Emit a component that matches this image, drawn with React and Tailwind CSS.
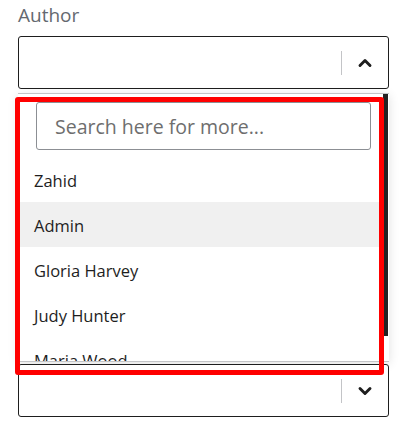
import { ChevronUp, ChevronDown } from 'lucide-react';

const authors = ['Zahid', 'Admin', 'Gloria Harvey', 'Judy Hunter', 'Maria Wood'];

const SelectBox = ({ open }) => (
    <div className="h-[53px] border border-[#1e1e1e] rounded-[3px] bg-white flex items-center justify-end">
        <div className="w-px h-[24px] bg-[#c3c4c7]" />
        <div className="w-[46px] flex items-center justify-center">
            {open ? (
                <ChevronUp className="w-[20px] h-[20px] text-[#1e1e1e]" strokeWidth={3.5} />
            ) : (
                <ChevronDown className="w-[20px] h-[20px] text-[#1e1e1e]" strokeWidth={3.5} />
            )}
        </div>
    </div>
);

export default function App() {
    return (
        <div className="relative w-[407px] h-[448px] bg-white px-[18px] pt-[2px] font-['Open_Sans',sans-serif]">
            <div className="text-[19px] leading-[26px] text-[#646970] mb-[8px]">Author</div>
            <SelectBox open />

            <div className="mt-[4px] h-[269px] border-t border-b border-[#c3c4c7] bg-white shadow-[0_2px_10px_rgba(0,0,0,0.12)] flex overflow-hidden">
                <div className="flex-1 pt-[8px] pl-[2px]">
                    <div className="pl-[16px] pr-[12px]">
                        <input
                            className="w-full h-[48px] border border-[#8c8f94] rounded-[3px] px-[18px] text-[19.5px] text-[#1e1e1e] placeholder:text-[#6e6e6e] outline-none"
                            placeholder="Search here for more..."
                        />
                    </div>
                    <ul className="mt-[7px]">
                        {authors.map((name) => (
                            <li
                                key={name}
                                className={`h-[45px] flex items-center pl-[14px] pt-[4px] text-[16.5px] text-[#1e1e1e] ${name === 'Admin' ? 'bg-[#f0f0f0]' : ''}`}
                            >
                                {name}
                            </li>
                        ))}
                    </ul>
                </div>
                <div className="w-[6px] pr-[1px]">
                    <div className="w-[5px] h-[242px] bg-[#222]" />
                </div>
            </div>

            <div className="mt-[2px]">
                <SelectBox />
            </div>

            <div className="absolute left-[15px] top-[97px] w-[369px] h-[278px] border-[5px] border-[#ff0000] rounded-[3px] pointer-events-none" />
        </div>
    );
}
